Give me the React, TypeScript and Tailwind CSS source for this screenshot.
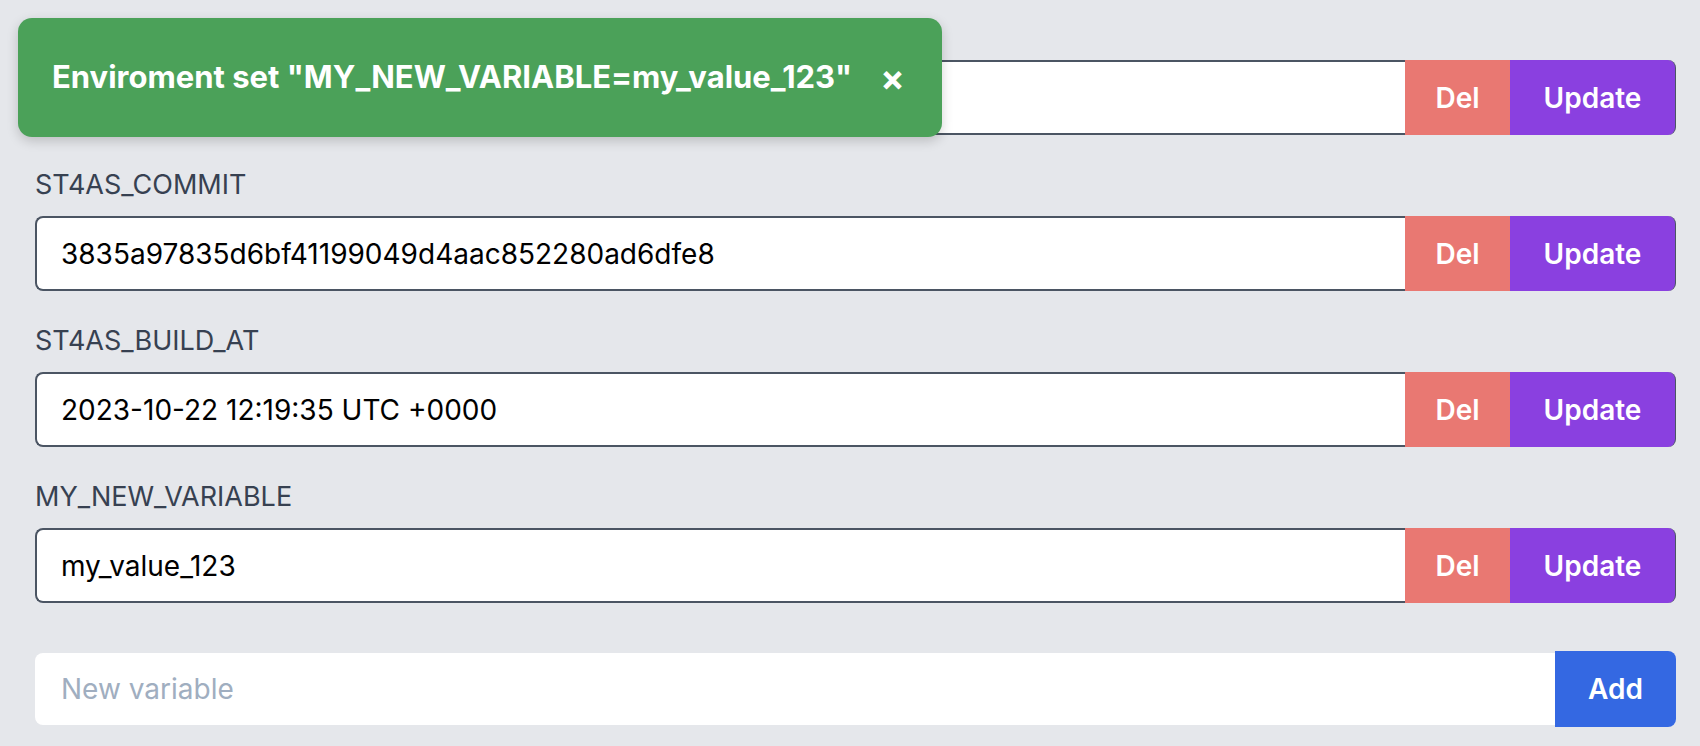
import React from 'react';

const vars = [
  { name: 'ST4AS_VERSION', value: '' },
  { name: 'ST4AS_COMMIT', value: '3835a97835d6bf41199049d4aac852280ad6dfe8' },
  { name: 'ST4AS_BUILD_AT', value: '2023-10-22 12:19:35 UTC +0000' },
  { name: 'MY_NEW_VARIABLE', value: 'my_value_123' },
];

const font = { fontFamily: 'Inter, "Noto Sans", sans-serif' };

export default function App() {
  return (
    <div className="relative min-h-[746px] w-full bg-[#e5e7eb]" style={font}>
      <div className="flex flex-col pl-[35px] pr-[24px] pt-[8px]">
        {vars.map((v) => (
          <div key={v.name} className="mb-[29px] flex flex-col">
            <label className="mb-[10px] text-[27px] leading-[42px] text-[#374151]">{v.name}</label>
            <div className="flex h-[75px]">
              <input
                readOnly
                value={v.value}
                className="h-full flex-1 rounded-l-lg border-2 border-r-0 border-[#4b5563] bg-white px-[24px] text-[28px] text-black outline-none"
              />
              <button className="h-full w-[105px] bg-[#e97872] text-[28px] font-semibold text-white">Del</button>
              <button className="h-full w-[166px] rounded-r-lg border-r border-[#4b5563] bg-[#8a40e0] text-[28px] font-semibold text-white">
                Update
              </button>
            </div>
          </div>
        ))}

        <div className="mt-[19px] flex h-[76px] items-center">
          <input
            placeholder="New variable"
            className="h-[72px] flex-1 rounded-l-lg bg-white px-[26px] text-[28px] text-black outline-none placeholder:text-[#a0aec0]"
          />
          <button className="h-[76px] w-[121px] rounded-r-lg bg-[#3468e2] text-[28px] font-semibold text-white">Add</button>
        </div>
      </div>

      {/* toast */}
      <div className="absolute left-[18px] top-[18px] flex h-[119px] w-[924px] items-center rounded-[14px] bg-[#4ba159] pl-[34px] shadow-[0_4px_12px_rgba(0,0,0,0.18)]">
        <span className="text-[31px] font-bold text-white">Enviroment set "MY_NEW_VARIABLE=my_value_123"</span>
        <button className="ml-[28px] text-[36px] font-bold leading-none text-white">×</button>
      </div>
    </div>
  );
}
